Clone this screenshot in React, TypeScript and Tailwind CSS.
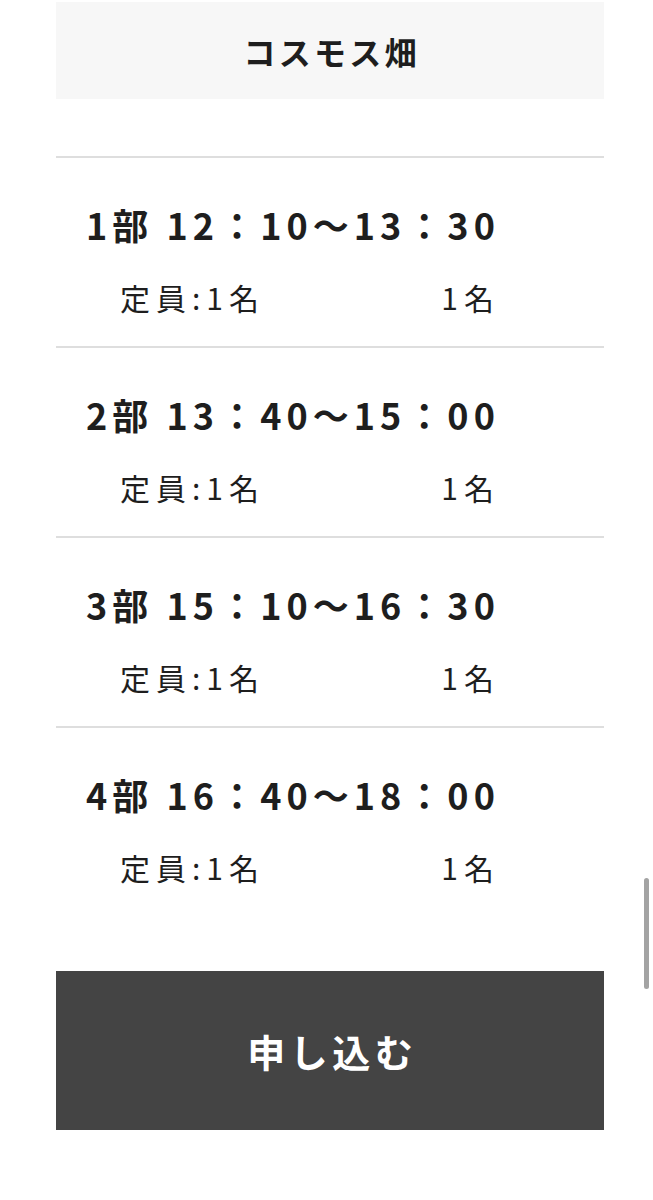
const sessions = [
  { no: 1, time: "12：10〜13：30" },
  { no: 2, time: "13：40〜15：00" },
  { no: 3, time: "15：10〜16：30" },
  { no: 4, time: "16：40〜18：00" },
];

const font = { fontFamily: '"Noto Sans CJK JP", "Noto Sans", sans-serif' };

export default function App() {
  return (
    <div className="relative min-h-[1200px] bg-white text-[#1e1e1e]" style={font}>
      <div className="ml-[56px] w-[548px] pt-[2px]">
        {/* Header */}
        <div className="flex h-[97px] items-center justify-center bg-[#f7f7f7]">
          <h1 className="pl-[0.1em] text-[32px] font-bold leading-none tracking-[0.1em]">コスモス畑</h1>
        </div>

        <div className="mt-[57px]">
          {sessions.map((s) => (
            <div key={s.no} className="border-t-2 border-[#dedede] pb-[29px] last:pb-0">
              <p className="mt-[46px] pl-[30px] text-[36px] font-bold leading-[40px] tracking-[0.14em]">
                {s.no}部 {s.time}
              </p>
              <div className="mt-[33px] flex items-center justify-between pl-[64px] pr-[104px] text-[30px] leading-[40px] tracking-[0.2em]">
                <span>定員:1名</span>
                <span>1名</span>
              </div>
            </div>
          ))}
        </div>

        {/* Submit */}
        <button className="mt-[84px] flex h-[159px] w-full items-center justify-center bg-[#444444] pl-[0.12em] text-[38px] font-bold tracking-[0.12em] text-white">
          申し込む
        </button>
      </div>

      {/* Scrollbar thumb */}
      <div className="absolute right-[4px] top-[878px] h-[111px] w-[5px] rounded-full bg-[#a3a3a3]" />
    </div>
  );
}
